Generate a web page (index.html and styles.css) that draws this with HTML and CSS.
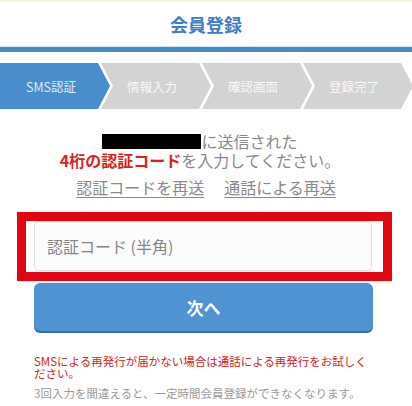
FILE: index.html
```html
<!DOCTYPE html>
<html lang="ja">
<head>
  <meta charset="UTF-8" />
  <meta name="viewport" content="width=device-width, initial-scale=1.0"/>
  <title>会員登録</title>
  <link rel="stylesheet" href="styles.css">
</head>
<body>
  <div id="header">
    <h1>会員登録</h1>
  </div>
  <div class="bar"></div>

  <div class="steps">
    <div class="step active">SMS認証</div>
    <div class="step">情報入力</div>
    <div class="step">確認画面</div>
    <div class="step">登録完了</div>
  </div>

  <div class="message">
    <p><span class="masked"></span>に送信された</p>
    <p><b class="red">4桁の認証コード</b>を入力してください。</p>
  </div>
  <div class="resend">
    <a href="#">認証コードを再送</a>
    <a href="#">通話による再送</a>
  </div>

  <div class="highlight">
    <input type="text" id="code" placeholder="認証コード (半角)" />
  </div>
  <div class="column">
    <button>次へ</button>
    <p class="note-red">SMSによる再発行が届かない場合は通話による再発行をお試しください。</p>
    <p class="note">3回入力を間違えると、一定時間会員登録ができなくなります。</p>
  </div>
</body>
</html>
```

FILE: styles.css
```css
body {
  margin: 0;
  background: white;
  font-family: "Noto Sans CJK JP", "Noto Sans", sans-serif;
  color: #8a8a8a;
}
#header {
  border-top: 2px solid #f3f6dc;
  height: 45px;
  text-align: center;
}
#header h1 {
  margin: 0;
  font-size: 18px;
  line-height: 45px;
  color: #3d80c3;
}
.bar {
  height: 5px;
  background: #4a8bc6;
  box-shadow: 0 -1px 0 #cfe4f5;
}
.steps {
  display: flex;
  margin-top: 11px;
  height: 46px;
}
.step {
  flex: none;
  width: 110px;
  margin-left: -9px;
  padding-right: 8px;
  box-sizing: border-box;
  background: #d3d3d3;
  color: #f8f8f8;
  font-size: 12.5px;
  display: flex;
  align-items: center;
  justify-content: center;
  clip-path: polygon(0 0, calc(100% - 12px) 0, 100% 50%, calc(100% - 12px) 100%, 0 100%, 12px 50%);
}
.step.active {
  margin-left: 0;
  background: #4a8dcc;
  color: #dde9f6;
  clip-path: polygon(0 0, calc(100% - 12px) 0, 100% 50%, calc(100% - 12px) 100%, 0 100%);
}
.message {
  margin: 23px 34px 0 34px;
  padding-right: 12px;
  text-align: center;
  font-size: 16px;
  line-height: 18px;
}
.message p {
  margin: 0;
}
.message p + p {
  margin-top: 1px;
}
.masked {
  display: inline-block;
  width: 99px;
  height: 15px;
  background: black;
  vertical-align: -1px;
}
.red {
  color: #d8231b;
}
.resend {
  margin: 9px 34px 0 34px;
  display: flex;
  justify-content: center;
  gap: 20px;
  font-size: 16px;
  line-height: 19px;
}
.resend a {
  color: #8a8a8a;
  text-decoration: underline;
  text-underline-offset: 3px;
}
.highlight {
  margin: 15px 20px 0 17px;
  border: 9px solid #e20613;
  padding: 0 11px 1px 8px;
}
#code {
  display: block;
  width: 100%;
  box-sizing: border-box;
  height: 50px;
  border: 1px solid #e2e2e2;
  border-radius: 4px;
  background: #fcfcfc;
  padding-left: 12px;
  font-family: inherit;
  font-size: 16px;
}
#code::placeholder {
  color: #858585;
}
.column {
  margin: 0 39px 0 34px;
}
button {
  display: block;
  width: 100%;
  height: 48px;
  margin-top: 2px;
  border: none;
  border-radius: 6px;
  background: #4f93d2;
  box-shadow: 0 2px 0 #3b6ea0;
  color: white;
  font-family: inherit;
  font-size: 17px;
  font-weight: bold;
}
.note-red {
  margin: 24px 0 0 0;
  color: #d8231b;
  font-size: 11.5px;
  line-height: 12px;
}
.note {
  margin: 7px 0 0 0;
  font-size: 11.5px;
  line-height: 14px;
  color: #9a9a9a;
}
```
